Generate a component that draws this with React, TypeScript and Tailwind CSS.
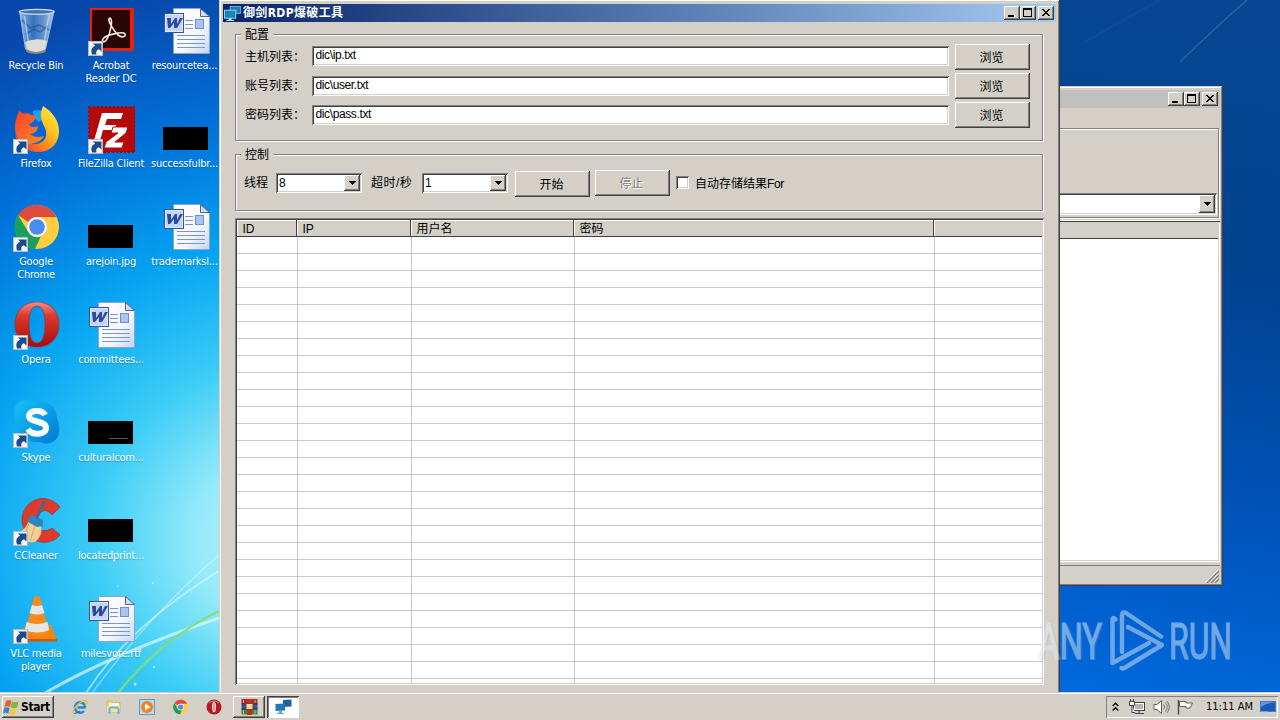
import type { ReactNode } from "react";

const RAISED =
  "bg-[#d4d0c8] shadow-[inset_-1px_-1px_0_#404040,inset_1px_1px_0_#fff,inset_-2px_-2px_0_#808080]";
const SUNKEN =
  "bg-white shadow-[inset_1px_1px_0_#808080,inset_-1px_-1px_0_#fff,inset_2px_2px_0_#404040,inset_-2px_-2px_0_#d4d0c8]";
const TAHOMA = "font-['DejaVu_Sans_Condensed','DejaVu_Sans','Noto_Sans_CJK_SC',sans-serif]";
const SONG = "font-['Liberation_Sans','Noto_Sans_CJK_SC',sans-serif]";

/* ---------- desktop icons ---------- */

function Shortcut() {
  return (
    <g>
      <rect x="1.5" y="33.500" width="14" height="14" fill="#f4f6f8" stroke="#b8bcc0" />
      <path d="M5 46.500c-1.500-5 0-7.500 3.200-8.700L6 35.500h8.500v8l-2.600-2.300c-2.400.8-3.200 2.600-2.400 5.300z" fill="#1c4b8c" />
    </g>
  );
}

function RecycleBin() {
  return (
    <svg width="48" height="48" viewBox="0 0 48 48">
      <defs>
        <linearGradient id="bin" x1="0" x2="1">
          <stop offset="0" stopColor="#a9c8e8" stopOpacity=".85" />
          <stop offset=".4" stopColor="#3f7cc4" stopOpacity=".8" />
          <stop offset=".7" stopColor="#7fa9d8" stopOpacity=".8" />
          <stop offset="1" stopColor="#c4daee" stopOpacity=".85" />
        </linearGradient>
      </defs>
      <path d="M7.500 3l6 38q10 6 20 0l8.500-38z" fill="url(#bin)" stroke="#a5bdd6" />
      <path d="M13 34q11-5 22-1l-2 9q-9 5-18 0z" fill="#dcdcd8" />
      <path d="M14 41q10 6 20 0l-.5 3q-10 4-19 0z" fill="#8f8a80" />
      <path d="M10 12l8 8 9-3 10 5M14 26l8-5 6 3 8-6" fill="none" stroke="#1b4f96" strokeWidth="1.800" opacity=".55" />
      <path d="M12.500 8l4 27M37 7l-5 28" stroke="#e4f0fa" strokeWidth="1.500" opacity=".5" />
      <ellipse cx="24.700" cy="3.800" rx="17.500" ry="2.500" fill="#3d76b8" stroke="#cfdbe6" strokeWidth="1.200" />
    </svg>
  );
}

function Acrobat() {
  return (
    <svg width="48" height="48" viewBox="0 0 48 48">
      <rect x="3" y="0" width="44" height="43" fill="#ea1f0d" />
      <rect x="5" y="2" width="38" height="38" fill="#2a0508" />
      <g fill="none" stroke="#f3ece6" strokeWidth="1.600">
        <path d="M23 10c-4 1 4 13 8 17 4 3 8 2 7-1-2-3-20 1-22 5-2 3 2 4 4 0 4-7 6-20 3-21z" />
      </g>
      <Shortcut />
    </svg>
  );
}

function WordDoc() {
  return (
    <svg width="48" height="48" viewBox="0 0 48 48">
      <defs>
        <linearGradient id="page" x1="0" y1="0" x2="1" y2="1">
          <stop offset="0" stopColor="#ffffff" />
          <stop offset=".6" stopColor="#f4f8ff" />
          <stop offset="1" stopColor="#c3d4f6" />
        </linearGradient>
      </defs>
      <path d="M11.500.5h27l9 9v36h-36z" fill="url(#page)" stroke="#8fa3c8" />
      <path d="M38.500.5v8h9z" fill="#d5def0" stroke="#50648c" />
      <path d="M23 12.500h8M23 16.500h8M23 20.500h8M15 27.500h28M15 31.500h28M15 35.500h28M15 39.500h28" stroke="#7d93cf" />
      <rect x="33.500" y="11.500" width="8" height="9" fill="#a9c4ee" stroke="#6f8fd0" />
      <rect x="2.500" y="5.500" width="19" height="19" fill="#dfe8fa" stroke="#3552a4" />
      <rect x="4" y="7" width="16" height="16" fill="#c4d4f4" />
      <path d="M5 10h4l0 6 4-6h2v6l3-6h3l-6 10h-3v-5l-4 5H6z" fill="#2b4aa0" />
    </svg>
  );
}

function BlackThumb({ mark }: { mark?: string }) {
  return (
    <svg width="48" height="48" viewBox="0 0 48 48">
      <rect x="1" y="21" width="45" height="23" fill="#000" />
      {mark && <path d={mark} stroke="#6a6a6a" strokeWidth=".8" />}
    </svg>
  );
}

function Firefox() {
  return (
    <svg width="48" height="48" viewBox="0 0 48 48">
      <defs>
        <linearGradient id="fx" x1="1" y1="0" x2="0" y2="1">
          <stop offset="0" stopColor="#fff14a" />
          <stop offset=".35" stopColor="#ffc41f" />
          <stop offset=".65" stopColor="#ff7a1c" />
          <stop offset="1" stopColor="#f0255e" />
        </linearGradient>
        <linearGradient id="fx2" x1="0" y1="0" x2="1" y2="1">
          <stop offset="0" stopColor="#ff3d2e" />
          <stop offset="1" stopColor="#ff9022" />
        </linearGradient>
      </defs>
      <circle cx="26" cy="19" r="15" fill="#0b63d8" />
      <path d="M21 5q10-3 13 5l-7 6q-6-3-6-11z" fill="#18a5ee" />
      <path d="M31 0c10 6 16 15 16 25 0 13-9 21-21 21S3 37 3 25c0 6 6 14 14 13 14 2 20-6 16-16-4-8-6-12-2-22z" fill="url(#fx)" />
      <path d="M7 4c2 3 5 4 9 3 2 2 4 2 8 3-1 4-2 6-7 8 0 3 4 4 9 2 0 5-4 8-8 8 3 3 9 4 14 2-3 6-10 8-16 8C8 38 3 31 3 22 3 14 5 12 7 4z" fill="url(#fx2)" />
      <Shortcut />
    </svg>
  );
}

function FileZilla() {
  return (
    <svg width="48" height="48" viewBox="0 0 48 48">
      <rect x="2" y="1" width="46" height="45" fill="#b40a0c" stroke="#a00608" strokeWidth="2" strokeDasharray="2 2" />
      <path d="M15 7h21l-2 6H20l-2 6h11l-1 5H16l-4 14H6z" fill="#fff" />
      <path d="M26 21h15l-2 6-11 9h9l-2 6H17l2-6 12-9h-7z" fill="#fff" stroke="#b40a0c" strokeWidth="1" />
      <Shortcut />
    </svg>
  );
}

function ChromeShapes() {
  return (
    <>
      <circle cx="25" cy="23" r="22" fill="#ffcd40" />
      <path d="M25 1a22 22 0 0 1 19.500 12H25a10 10 0 0 0-8.700 5L6 11A22 22 0 0 1 25 1z" fill="#dc4b3e" />
      <path d="M6 11l10.300 17a10 10 0 0 0 12.500 4.500L23 45A22 22 0 0 1 6 11z" fill="#1aa05c" />
      <circle cx="25" cy="23" r="10" fill="#f4f4f4" />
      <circle cx="25" cy="23" r="7.800" fill="#4c8af4" />
    </>
  );
}

function Chrome() {
  return (
    <svg width="48" height="48" viewBox="0 0 48 48">
      <ChromeShapes />
      <Shortcut />
    </svg>
  );
}

function Opera() {
  return (
    <svg width="48" height="48" viewBox="0 0 48 48">
      <defs>
        <linearGradient id="op" x1="0" y1="0" x2="0" y2="1">
          <stop offset="0" stopColor="#f2908a" />
          <stop offset=".3" stopColor="#dc3a30" />
          <stop offset="1" stopColor="#a80c08" />
        </linearGradient>
      </defs>
      <path
        fillRule="evenodd"
        d="M25 0c13 0 22 9 22 22.500S38 45 25 45 3 36 3 22.500 12 0 25 0zm0 4c-5.500 0-8 7-8 18.500S19.500 41 25 41s8-7 8-18.500S30.500 4 25 4z"
        fill="url(#op)"
        stroke="#b02018"
        strokeWidth=".6"
      />
      <Shortcut />
    </svg>
  );
}

function Skype() {
  return (
    <svg width="48" height="48" viewBox="0 0 48 48">
      <defs>
        <linearGradient id="sk" x1="0" y1="0" x2="1" y2="1">
          <stop offset="0" stopColor="#18c0f4" />
          <stop offset=".5" stopColor="#0a9fe8" />
          <stop offset="1" stopColor="#0078d4" />
        </linearGradient>
      </defs>
      <path d="M5 4c6-6 12-3 16-3 15 0 23 4 24 17 3 8 3 15 0 20-5 7-13 6-17 4C14 44 6 34 5 24 2 16 1 9 5 4z" fill="url(#sk)" />
      <path d="M33 15c-3-6-16-5-16 1 0 7 17 4 17 12 0 7-14 8-18 1" fill="none" stroke="#fff" strokeWidth="6" />
      <Shortcut />
    </svg>
  );
}

function CCleaner() {
  return (
    <svg width="48" height="48" viewBox="0 0 48 48">
      <path d="M48 9C37-4 20-1 13 11 6 23 12 38 25 43c8 3 17 1 23-6l-8-7c-5 4-12 4-15-2-3-7 0-13 6-15 4-1 7 1 9 4z" fill="#dc3b2b" stroke="#a82418" strokeWidth=".6" />
      <path d="M17 21l12 7q2 10-6 16-14 2-19-8 11-4 13-15z" fill="#f3cf98" />
      <path d="M17 25l-6 15M23 28l-5 15" stroke="#d9a765" />
      <path d="M16 20l4-3 11 5v6l-6 1-9-5z" fill="#2f86bc" />
      <path d="M25 20l7-16" stroke="#2c6fa8" strokeWidth="2.500" strokeLinecap="round" />
      <Shortcut />
    </svg>
  );
}

function Vlc() {
  return (
    <svg width="48" height="48" viewBox="0 0 48 48">
      <path d="M13 29h26l6 15H9z" fill="#f58213" />
      <path d="M9 43h36v2.500H9z" fill="#c85a08" />
      <path d="M22 1q3-2 6 0l9 36q-12 6-24 0z" fill="#f68a1c" />
      <path d="M20 9q5 2 10 0l2.500 8q-7.500 3-15 0zM14.500 26q10.500 4 21 0l1.800 8q-12.300 5-24.300 0z" fill="#e6e6e6" />
      <Shortcut />
    </svg>
  );
}

type Item = { icon: ReactNode; label: string[] };

const desktop: Item[][] = [
  [
    { icon: <RecycleBin />, label: ["Recycle Bin"] },
    { icon: <Firefox />, label: ["Firefox"] },
    { icon: <Chrome />, label: ["Google", "Chrome"] },
    { icon: <Opera />, label: ["Opera"] },
    { icon: <Skype />, label: ["Skype"] },
    { icon: <CCleaner />, label: ["CCleaner"] },
    { icon: <Vlc />, label: ["VLC media", "player"] },
  ],
  [
    { icon: <Acrobat />, label: ["Acrobat", "Reader DC"] },
    { icon: <FileZilla />, label: ["FileZilla Client"] },
    { icon: <BlackThumb />, label: ["arejoin.jpg"] },
    { icon: <WordDoc />, label: ["committees..."] },
    { icon: <BlackThumb mark="M22 38.500h19" />, label: ["culturalcom..."] },
    { icon: <BlackThumb />, label: ["locatedprint..."] },
    { icon: <WordDoc />, label: ["milesvote.rtf"] },
  ],
  [
    { icon: <WordDoc />, label: ["resourcetea..."] },
    { icon: <BlackThumb />, label: ["successfulbr..."] },
    { icon: <WordDoc />, label: ["trademarksl..."] },
  ],
];

function Wallpaper() {
  return (
    <svg className="absolute inset-0" width="1280" height="720" viewBox="0 0 1280 720">
      <defs>
        <radialGradient id="glow" gradientUnits="userSpaceOnUse" cx="0" cy="0" r="1" gradientTransform="translate(300 540) scale(620 560)">
          <stop offset="0" stopColor="#c8f6fb" />
          <stop offset=".17" stopColor="#94eafa" />
          <stop offset=".33" stopColor="#3ccdf6" />
          <stop offset=".53" stopColor="#06a4f2" />
          <stop offset=".76" stopColor="#0070d8" />
          <stop offset="1" stopColor="#0848ac" />
        </radialGradient>
        <linearGradient id="side" gradientUnits="userSpaceOnUse" x1="1200" y1="0" x2="1060" y2="700">
          <stop offset="0" stopColor="#074791" />
          <stop offset=".35" stopColor="#00438f" />
          <stop offset=".65" stopColor="#0050b4" />
          <stop offset="1" stopColor="#006be0" />
        </linearGradient>
      </defs>
      <rect width="640" height="720" fill="url(#glow)" />
      <rect x="640" width="640" height="720" fill="url(#side)" />
      <g fill="none">
        <path d="M45 693Q110 655 219 618" stroke="#dff8ff" strokeWidth="3" opacity=".7" />
        <path d="M86 693Q130 625 219 571" stroke="#dff8ff" strokeWidth="2" opacity=".6" />
        <path d="M92 693Q150 615 219 555" stroke="#dff8ff" strokeWidth="1.500" opacity=".45" />
        <path d="M118 693Q160 640 219 611" stroke="#7fe070" strokeWidth="2.500" opacity=".9" />
        <path d="M1180 62Q1215 28 1247 0" stroke="#5c8cc0" strokeWidth="1.500" opacity=".4" />
        <path d="M1085 42Q1120 22 1160 0" stroke="#3c74b4" strokeWidth="3" opacity=".12" />
      </g>
      <g fill="#e8fbff" opacity=".7">
        <circle cx="114" cy="561" r="1.200" />
        <circle cx="153" cy="583" r="1" />
        <circle cx="118" cy="586" r=".8" />
        <circle cx="135" cy="684" r="1.500" />
        <circle cx="154" cy="667" r="1" />
      </g>
    </svg>
  );
}

/* ---------- window parts ---------- */

function Computers({ size }: { size: number }) {
  return (
    <svg width={size} height={size} viewBox="0 0 18 18">
      <rect x="6.500" y="1.500" width="11" height="7.500" fill="#1f78b4" stroke="#7cc6e8" strokeWidth=".8" />
      <rect x=".5" y="5.500" width="12" height="8.500" fill="#1488b8" stroke="#a8e0f4" strokeWidth=".9" />
      <path d="M5 14h3v2h2.500v1h-8v-1H5z" fill="#c4ecf8" />
    </svg>
  );
}

function CaptionButton({ kind }: { kind: "min" | "max" | "close" }) {
  return (
    <div className={`h-[14px] w-4 ${RAISED}`}>
      <svg width="16" height="14" viewBox="0 0 16 14" shapeRendering="crispEdges">
        {kind === "min" && <rect x="4" y="9" width="6" height="2" />}
        {kind === "max" && <path fillRule="evenodd" d="M3 2h9v9H3zM4 4v6h7V4z" />}
        {kind === "close" && <path d="M4 3h2v1h1v1h2V4h1V3h2v1h-1v1h-1v1H9v1h1v1h1v1h1v1h-2V9H9V8H7v1H6v1H4V9h1V8h1V7h1V6H6V5H5V4H4z" />}
      </svg>
    </div>
  );
}

function CaptionButtons() {
  return (
    <div className="flex">
      <CaptionButton kind="min" />
      <CaptionButton kind="max" />
      <div className="w-[2px]" />
      <CaptionButton kind="close" />
    </div>
  );
}

function Group({ title, className, children }: { title: string; className: string; children: ReactNode }) {
  return (
    <div className={`relative border border-[#808080] shadow-[1px_1px_0_#fff,inset_1px_1px_0_#fff] ${className}`}>
      <div className="absolute -top-[8px] left-[5px] h-4 bg-[#d4d0c8] px-1 leading-4">{title}</div>
      {children}
    </div>
  );
}

function Button({ children, disabled, className = "" }: { children: ReactNode; disabled?: boolean; className?: string }) {
  return (
    <button
      className={`flex h-[26px] w-[75px] items-center justify-center pt-[2px] pr-[2px] ${RAISED} ${
        disabled ? "text-[#808080] [text-shadow:1px_1px_0_#fff]" : "text-black"
      } ${className}`}
    >
      {children}
    </button>
  );
}

function DropArrow() {
  return (
    <div className={`flex h-full w-4 items-center justify-center ${RAISED}`}>
      <svg width="7" height="4" viewBox="0 0 7 4" shapeRendering="crispEdges">
        <path d="M0 0h7v1H6v1H5v1H4v1H3V3H2V2H1V1H0z" />
      </svg>
    </div>
  );
}

function Combo({ value, className }: { value: string; className: string }) {
  return (
    <div className={`flex items-center justify-between p-[2px] pl-[3px] ${SUNKEN} ${className}`}>
      <span>{value}</span>
      <DropArrow />
    </div>
  );
}

const files = [
  { label: "主机列表：", value: "dic\\ip.txt", nudge: "mb-[2px]" },
  { label: "账号列表：", value: "dic\\user.txt", nudge: "" },
  { label: "密码列表：", value: "dic\\pass.txt", nudge: "" },
];

const headers = ["ID", "IP", "用户名", "密码", ""];
const rows = Array.from({ length: 27 }, (_, i) => i);

function MainWindow() {
  return (
    <div
      className={`absolute left-[219px] top-0 h-[720px] w-[841px] bg-[#d4d0c8] p-1 text-[12px] shadow-[inset_-1px_0_0_#404040,inset_1px_0_0_#d4d0c8,inset_2px_1px_0_#fff,inset_-2px_0_0_#808080] ${SONG}`}
    >
      <div className="flex h-[18px] items-center justify-between bg-linear-to-r from-[#0a246a] to-[#a6caf0] pr-[2px] pl-px">
        <div className="flex items-center gap-[2px] text-white">
          <Computers size={17} />
          <span className="text-[12px] leading-[18px] font-bold tracking-[0.35px] font-['DejaVu_Sans_Condensed','Noto_Sans_CJK_SC',sans-serif]">御剑RDP爆破工具</span>
        </div>
        <CaptionButtons />
      </div>
      <div className="flex flex-col pt-3 pl-3">
        <Group title="配置" className="flex h-[107px] w-[808px] flex-col gap-[3px] pt-[9px] pl-[9px]">
          {files.map((f) => (
            <div key={f.label} className="flex h-[26px] items-center">
              <span className="w-[67px] whitespace-nowrap">{f.label}</span>
              <div className={`mr-[6px] h-5 w-[637px] pl-[3.5px] leading-[19px] tracking-[-0.38px] ${SUNKEN} ${f.nudge}`}>{f.value}</div>
              <Button>浏览</Button>
            </div>
          ))}
        </Group>
        <Group title="控制" className="mt-[13px] flex h-[57px] w-[808px] items-start pl-2">
          <span className="mt-[19px] w-8">线程</span>
          <Combo value="8" className="mt-[18px] h-5 w-[86px]" />
          <span className="mt-[19px] ml-[9px] w-[51px] tracking-[0.5px] whitespace-nowrap">超时/秒</span>
          <Combo value="1" className="mt-[18px] h-5 w-[86px]" />
          <Button className="mt-4 ml-[7px]">开始</Button>
          <Button disabled className="mt-[15px] ml-[5px]">
            停止
          </Button>
          <div className={`mt-[21px] ml-[6px] size-[13px] ${SUNKEN}`} />
          <span className="mt-5 ml-[6px] whitespace-nowrap">
            自动存储结果<span className="tracking-[-0.4px]">For</span>
          </span>
        </Group>
        <div className={`mt-[7px] h-[467px] w-[809px] p-[2px] ${SUNKEN}`}>
          <div className="flex h-full flex-col overflow-hidden">
            <div className="grid h-[17px] shrink-0 grid-cols-[60px_114px_163px_360px_120px]">
              {headers.map((h, i) => (
                <div
                  key={i}
                  className="h-[17px] bg-[#d4d0c8] pt-px pl-[5.5px] leading-4 shadow-[inset_-1px_-1px_0_#404040,inset_1px_1px_0_#fff]"
                >
                  {h}
                </div>
              ))}
            </div>
            {rows.map((r) => (
              <div key={r} className="grid h-[17px] shrink-0 grid-cols-[60px_114px_163px_360px_120px] border-b border-[#c8c8c8]">
                <div />
                <div className="border-l border-[#c8c8c8]" />
                <div className="border-l border-[#c8c8c8]" />
                <div className="border-l border-[#c8c8c8]" />
                <div className="border-l border-[#c8c8c8]" />
              </div>
            ))}
          </div>
        </div>
      </div>
    </div>
  );
}

function BackWindow() {
  return (
    <div className="absolute top-[86px] left-[1000px] flex h-[500px] w-[223px] flex-col bg-[#d4d0c8] p-[3px] pt-1 shadow-[inset_-1px_-1px_0_#404040,inset_0_1px_0_#d4d0c8,inset_-2px_-2px_0_#808080,inset_0_2px_0_#fff]">
      <div className="flex h-[18px] shrink-0 items-center justify-end bg-[#c0c0c0] pr-[2px]">
        <CaptionButtons />
      </div>
      <div className="mt-5 flex h-[90px] w-[216px] shrink-0 flex-col justify-end border border-[#808080] pb-[2px] shadow-[1px_1px_0_#fff,inset_0_1px_0_#fff]">
        <Combo value="" className="mr-px h-[22px]" />
      </div>
      <div className="mt-[2px] flex h-[342px] w-[217px] shrink-0 flex-col border-t border-[#fff] bg-white p-[2px] pt-px shadow-[inset_0_1px_0_#404040,inset_-1px_-1px_0_#fff,inset_-2px_-2px_0_#d4d0c8]">
        <div className="h-[17px] border-b border-[#404040] bg-[#d4d0c8]" />
      </div>
      <div className="mt-[3px] flex h-[18px] shrink-0 items-end justify-end border-t border-[#808080] pr-px">
        <svg width="13" height="13" viewBox="0 0 13 13">
          <path d="M1 13L13 1M5 13l8-8M9 13l4-4" stroke="#808080" strokeWidth="1.500" />
          <path d="M0 12L12 0M4 12l8-8M8 12l4-4" stroke="#fff" strokeWidth=".8" />
        </svg>
      </div>
    </div>
  );
}

function Watermark() {
  return (
    <svg className="absolute top-[590px] left-[1020px] opacity-50" width="250" height="100" viewBox="1020 590 250 100">
      <defs>
        <linearGradient id="wm" x1="0" y1="0" x2="0" y2="1">
          <stop offset="0" stopColor="#f4f8fc" />
          <stop offset=".5" stopColor="#e0ecf8" />
          <stop offset="1" stopColor="#c8d8ec" />
        </linearGradient>
      </defs>
      <g fill="url(#wm)" className="font-['Roboto',sans-serif]" fontSize="50.500">
        <text x="1040" y="660" textLength="64" lengthAdjust="spacingAndGlyphs" fill="#8f9aa4" opacity=".35">ANY</text>
        <text x="1038" y="659" textLength="64" lengthAdjust="spacingAndGlyphs" stroke="#e0ecf8" strokeWidth="1.200">ANY</text>
        <text x="1169" y="659" textLength="63" lengthAdjust="spacingAndGlyphs" stroke="#e0ecf8" strokeWidth="1.200">RUN</text>
      </g>
      <g fill="none" stroke="#dceaf8" strokeWidth="4.400" strokeLinejoin="round" strokeLinecap="round">
        <path d="M1115.500 619.500Q1112 616 1112.500 621V663L1149 643" />
        <path d="M1122 652V615Q1122 611 1126 613L1161 636.500" />
        <path d="M1128 627L1162 645L1126 667Q1123 669.500 1121.500 668" />
      </g>
    </svg>
  );
}

/* ---------- taskbar ---------- */

function StartFlag() {
  return (
    <svg width="16" height="16" viewBox="0 0 16 16">
      <path d="M3 2q3-2 5.500 0L7 8Q4 6.500 1.500 8z" fill="#e8602c" />
      <path d="M9.200 2.500q3 1.600 6.500 0L14 8.500q-3 1.500-6.300-.2z" fill="#7cb83c" />
      <path d="M1.200 9Q4 7.300 6.700 9L5.200 14.500Q2.500 13 0 14.500z" fill="#3c84d0" />
      <path d="M7.400 9.300q3 1.600 6.300.2L12 15q-3 1.500-6-.2z" fill="#f8c83c" />
    </svg>
  );
}

function IeIcon() {
  return (
    <svg width="16" height="16" viewBox="0 0 16 16">
      <path d="M13.500 8.500H5.500M13.300 8.500A5.200 5.200 0 1 0 12 12" fill="none" stroke="#2488d8" strokeWidth="2.600" />
      <path d="M1 14.500C-1 11 9 1 14 1.500c2 .5 1 3-.5 5" fill="none" stroke="#e8c040" strokeWidth="1.300" />
      <path d="M2 14.500q3 0 6-2.500" fill="none" stroke="#1c64b4" strokeWidth="1" />
    </svg>
  );
}

function FolderIcon() {
  return (
    <svg width="16" height="16" viewBox="0 0 16 16">
      <path d="M1 2h5l1 1.500h7V13H1z" fill="#f0d070" stroke="#c8a848" strokeWidth=".6" />
      <path d="M3 4h10v4H3z" fill="#fdf8d8" />
      <path d="M1 7h13v6H1z" fill="#f8e49c" />
      <path d="M3.500 15v-4.500q0-2 2-2h5q2 0 2 2V15" fill="none" stroke="#68b4e0" strokeWidth="2" />
    </svg>
  );
}

function MediaIcon() {
  return (
    <svg width="16" height="16" viewBox="0 0 16 16">
      <rect x=".5" y=".5" width="15" height="15" fill="#b8d8f0" stroke="#5c9ccc" />
      <circle cx="8" cy="8" r="6" fill="#f08418" />
      <path d="M6 4.500v7L11.500 8z" fill="#fff" />
    </svg>
  );
}

function SmallOpera() {
  return (
    <svg width="16" height="16" viewBox="0 0 16 16">
      <circle cx="8" cy="8" r="7.500" fill="#b81820" />
      <path d="M3 4q5-4 10 0" stroke="#e88080" fill="none" />
      <ellipse cx="8" cy="8" rx="2" ry="5.300" fill="#e4dcdc" />
      <ellipse cx="8" cy="8" rx=".5" ry="4.300" fill="#a06064" />
    </svg>
  );
}

function WinRar() {
  return (
    <svg width="17" height="16" viewBox="0 0 17 16">
      <rect x=".5" y="0" width="16" height="5" fill="#a82840" />
      <rect x=".5" y="5" width="16" height="5" fill="#3850a8" />
      <rect x=".5" y="10" width="16" height="5.500" fill="#308848" />
      <path d="M.5 5h16M.5 10h16" stroke="#302838" />
      <rect x="6" y="0" width="5" height="16" fill="#d02818" />
      <rect x="5" y="4.500" width="7" height="6" fill="#f0e4b0" stroke="#80402c" />
      <path d="M7 6.500v3M10 6.500v3M2.500 1v3M14 1v3M2.500 11v4M14 11v4" stroke="#e8b850" />
    </svg>
  );
}

function Taskbar() {
  return (
    <div className="absolute bottom-0 left-0 flex h-7 w-full items-start bg-[#d4d0c8] pt-1 shadow-[inset_0_1px_0_#d4d0c8,inset_0_2px_0_#fff]">
      <div className={`ml-[2px] flex h-[22px] w-[52px] items-center gap-[2px] pl-px ${RAISED}`}>
        <StartFlag />
        <span className={`text-[12px] leading-none font-bold tracking-[-0.4px] ${TAHOMA}`}>Start</span>
      </div>
      <div className="ml-[18px] flex h-[22px] w-[150px] items-center justify-between">
        <IeIcon />
        <FolderIcon />
        <MediaIcon />
        <svg width="16" height="16" viewBox="2 -1 48 48">
          <ChromeShapes />
        </svg>
        <SmallOpera />
      </div>
      <div className={`ml-[11px] flex h-[22px] w-8 items-center justify-center ${RAISED}`}>
        <WinRar />
      </div>
      <div className="ml-[2px] flex h-[22px] w-8 items-center justify-center bg-white shadow-[inset_1px_1px_0_#404040,inset_-1px_-1px_0_#fff,inset_2px_2px_0_#808080]">
        <svg width="17" height="16" viewBox="0 0 17 16">
          <path d="M8 1l8.500-.5v7L8 8z" fill="#1c60a0" />
          <path d="M.5 5l9.500-.5v7L.5 12z" fill="#2078b8" />
          <path d="M4 12h3v2h2v1H2v-1h2z" fill="#58a8d8" />
        </svg>
      </div>
      <div className="mr-[2px] ml-auto flex h-[22px] w-[172px] items-center shadow-[inset_1px_1px_0_#808080,inset_-1px_-1px_0_#fff]">
        <svg className="ml-[6px]" width="7" height="10" viewBox="0 0 7 10">
          <path d="M.7 4L3.500 1.200 6.300 4M.7 8.500l2.800-2.800 2.800 2.800" fill="none" stroke="#000" strokeWidth="1.400" />
        </svg>
        <svg className="ml-[10px]" width="17" height="16" viewBox="0 0 17 16">
          <rect x="4.500" y="3.500" width="11" height="8" fill="#b4b4b4" stroke="#404040" />
          <path d="M5.500 4.500h9v6h-9z" fill="none" stroke="#fff" />
          <path d="M6 14.500h9M10 12v2" stroke="#404040" />
          <path d="M.5 2.500h5v4h-5zM1.500 0v2.500M4.500 0v2.500M3 6.500v7h3" fill="#fff" stroke="#404040" />
        </svg>
        <svg className="ml-[7px]" width="17" height="16" viewBox="0 0 17 16">
          <path d="M1 5.500h3L8.500 1.500v13L4 10.500H1z" fill="#fff" stroke="#606060" />
          <path d="M10.500 5.500q2 2.500 0 5M12.500 3.500q3.500 4.500 0 9M14 2q4.500 6 0 12" fill="none" stroke="#707070" strokeWidth=".9" />
        </svg>
        <svg className="ml-[7px]" width="17" height="16" viewBox="0 0 17 16">
          <path d="M2.500 2.500H9v1.500h6.500l-2.500 5H9v-1.500H2.500z" fill="#fff" stroke="#606060" />
          <path d="M1.500 1v14.500" stroke="#505050" strokeWidth="1.500" />
        </svg>
        <span className={`ml-3 w-[54px] text-[11px] whitespace-nowrap ${TAHOMA}`}>11:11 AM</span>
        <svg width="16" height="14" viewBox="0 0 16 14">
          <rect x=".5" y="1.500" width="15" height="10" fill="#1c58b8" stroke="#4878b8" />
          <path d="M1 7q7-5 14-4.500V2H1z" fill="#5c9ce4" />
          <path d="M1 11.500h7v1.500H2z" fill="#a8d0f0" />
        </svg>
      </div>
    </div>
  );
}

export default function App() {
  return (
    <div className="relative h-[720px] w-[1280px] overflow-hidden bg-[#0050b4] text-black">
      <Wallpaper />
      <div className={`relative -ml-[2px] flex pt-2 text-[11px] leading-[13px] tracking-[-0.2px] text-white ${TAHOMA}`}>
        {desktop.map((col, i) => (
          <div key={i} className="w-[75px]">
            {col.map((item) => (
              <div key={item.label[0]} className="flex h-[98px] flex-col items-center">
                {item.icon}
                <div
                  className={`mt-[3px] text-center whitespace-nowrap [text-shadow:0_1px_1px_rgba(0,40,100,0.35)] ${
                    i === 2 ? "pr-[2px]" : "pl-px"
                  }`}
                >
                  {item.label.map((line) => (
                    <div key={line}>{line}</div>
                  ))}
                </div>
              </div>
            ))}
          </div>
        ))}
      </div>
      <BackWindow />
      <MainWindow />
      <Watermark />
      <Taskbar />
    </div>
  );
}
